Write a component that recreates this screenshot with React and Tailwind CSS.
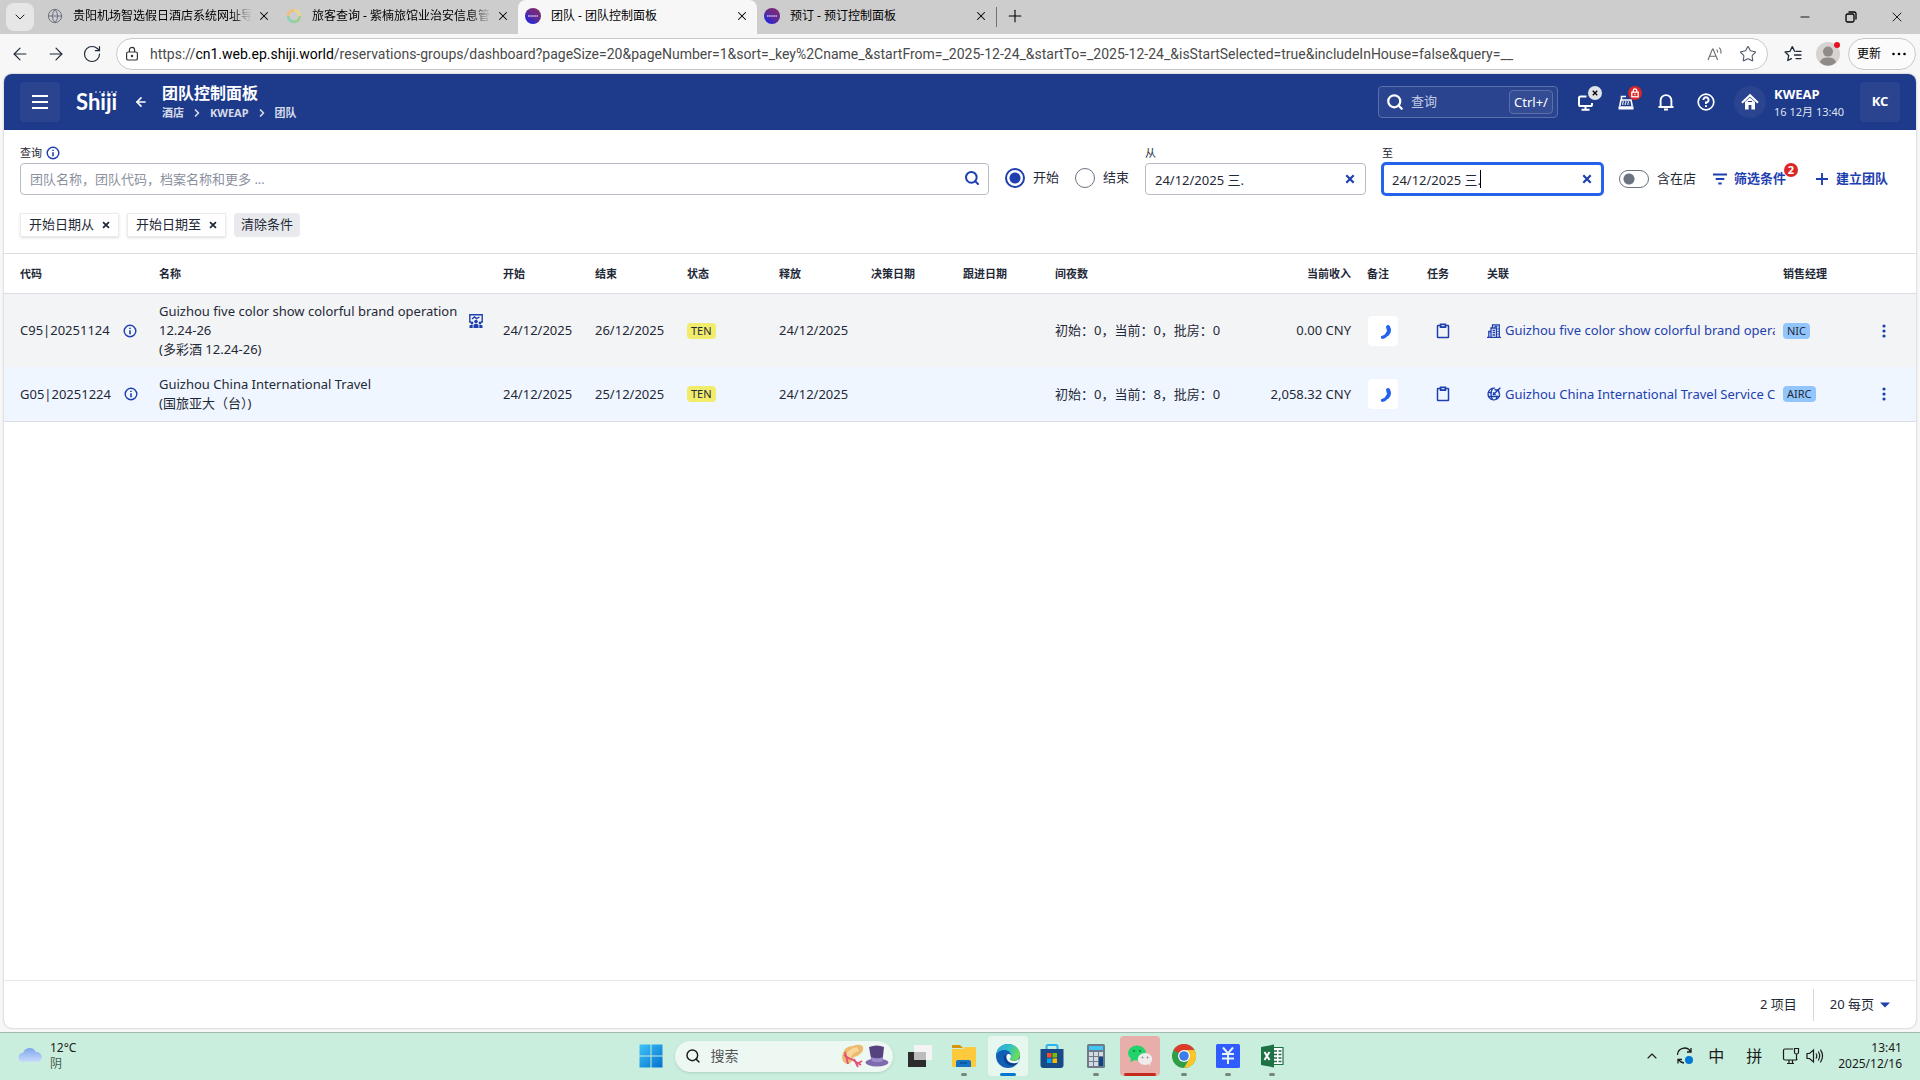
import React, { useState } from 'react';
import { ArrowLeft, ArrowRight, ChevronDown, ChevronRight, ChevronUp, Globe, Minus, Plus, RotateCw, Search, Star, X } from 'lucide-react';

const tabs = [
  { title: '贵阳机场智选假日酒店系统网址导', icon: 'globe' },
  { title: '旅客查询 - 紫楠旅馆业治安信息管', icon: 'ring' },
  { title: '团队 - 团队控制面板', icon: 'shiji', active: true },
  { title: '预订 - 预订控制面板', icon: 'shiji' },
];

const url = {
  scheme: 'https://',
  host: 'cn1.web.ep.shiji.world',
  path: '/reservations-groups/dashboard?pageSize=20&pageNumber=1&sort=_key%2Cname_&startFrom=_2025-12-24_&startTo=_2025-12-24_&isStartSelected=true&includeInHouse=false&query=__',
};

const groups = [
  {
    code: 'C95|20251124',
    name: 'Guizhou five color show colorful brand operation 12.24-26',
    alias: '(多彩酒 12.24-26)',
    event: true,
    start: '24/12/2025',
    end: '26/12/2025',
    status: 'TEN',
    release: '24/12/2025',
    nights: '初始：0，当前：0，批房：0',
    revenue: '0.00 CNY',
    profile: 'Guizhou five color show colorful brand operat',
    profileType: 'company',
    manager: 'NIC',
    rowClass: 'bg-[#f3f4f6]',
  },
  {
    code: 'G05|20251224',
    name: 'Guizhou China International Travel',
    alias: '(国旅亚大（台）)',
    start: '24/12/2025',
    end: '25/12/2025',
    status: 'TEN',
    release: '24/12/2025',
    nights: '初始：0，当前：8，批房：0',
    revenue: '2,058.32 CNY',
    profile: 'Guizhou China International Travel Service Ce',
    profileType: 'agency',
    manager: 'AIRC',
    rowClass: 'bg-[#eff6ff]',
  },
];

const InfoIcon = () => (
  <svg className="w-3.5 h-3.5 shrink-0 text-[#1e40af]" viewBox="0 0 14 14" fill="none" stroke="currentColor" strokeWidth="1.4">
    <circle cx="7" cy="7" r="5.8" />
    <path d="M7 6.2v4M7 3.7v1.4" strokeWidth="1.6" />
  </svg>
);

const CrossIcon = ({ className }) => (
  <svg className={className} viewBox="0 0 10 10" fill="none" stroke="currentColor" strokeWidth="2.2">
    <path d="M1.3 1.3l7.4 7.4M8.7 1.3L1.3 8.7" />
  </svg>
);

const TabIcon = ({ type }) => {
  if (type === 'globe') return <Globe className="w-4 h-4 shrink-0 text-gray-500" strokeWidth={1.5} />;
  if (type === 'ring') {
    return (
      <svg className="w-4 h-4 shrink-0" viewBox="0 0 16 16" fill="none" strokeWidth="2.6" strokeLinecap="round">
        <path d="M2.2 9A6 6 0 0 1 9 2.2" stroke="#f2c078" />
        <path d="M9 2.2A6 6 0 0 1 13.8 9" stroke="#e9d88a" />
        <path d="M13.8 9A6 6 0 0 1 7 13.8" stroke="#9ccf8a" />
        <path d="M7 13.8A6 6 0 0 1 2.2 9" stroke="#8ed0b4" />
      </svg>
    );
  }
  return (
    <svg className="w-4 h-4 shrink-0" viewBox="0 0 16 16">
      <defs>
        <linearGradient id="shijiTab" x1="0" y1="1" x2="0.8" y2="0">
          <stop offset="0" stopColor="#0a22ff" />
          <stop offset="0.5" stopColor="#5a2a9c" />
          <stop offset="1" stopColor="#86286a" />
        </linearGradient>
      </defs>
      <circle cx="8" cy="8" r="8" fill="url(#shijiTab)" />
      <path d="M3 8h10" stroke="#c9b8ea" strokeWidth="1.6" strokeDasharray="1.6 .5" />
    </svg>
  );
};

const TabBar = () => (
  <div className="flex h-[34px] bg-[#cdcdcd] text-black">
    <button aria-label="标签页操作" className="w-7 h-7 mt-[3px] mx-1.5 rounded-lg bg-[#e6e6e6] flex items-center justify-center">
      <ChevronDown className="w-4 h-4" strokeWidth={1.3} />
    </button>
    <div role="tablist" className="flex">
      {tabs.map((tab) => (
        <div
          key={tab.title}
          className={`w-[239px] h-full flex items-center px-[7px] pb-0.5 text-xs ${tab.active ? 'bg-[#f7f7f7] rounded-t-lg' : ''}`}
        >
          <button role="tab" aria-selected={!!tab.active} className="flex-1 min-w-0 flex items-center gap-2.5">
            <TabIcon type={tab.icon} />
            <span
              className={`flex-1 text-left whitespace-nowrap overflow-hidden mr-1 ${tab.icon === 'shiji' ? '' : '[mask-image:linear-gradient(to_right,black_88%,transparent)]'}`}
            >
              {tab.title}
            </span>
          </button>
          <button aria-label="关闭标签页" className="w-4 h-4 flex items-center justify-center">
            <X className="w-3.5 h-3.5" strokeWidth={1.8} />
          </button>
        </div>
      ))}
    </div>
    <div className="w-px h-5 mt-[7px] bg-gray-500" />
    <button aria-label="新建标签页" className="ml-2 mb-0.5">
      <Plus className="w-5 h-5" strokeWidth={1.3} />
    </button>
    <div className="ml-auto flex items-center">
      <button aria-label="最小化" className="w-[46px] flex justify-center">
        <Minus className="w-3.5 h-3.5" strokeWidth={1.5} />
      </button>
      <button aria-label="还原" className="w-[46px] flex justify-center">
        <svg className="w-3 h-3" viewBox="0 0 12 12" fill="none" stroke="currentColor" strokeWidth="1.3">
          <rect x="1" y="3" width="8" height="8" rx="1.5" />
          <path d="M3.5 1H9.2A1.8 1.8 0 0 1 11 2.8V8.5" />
        </svg>
      </button>
      <button aria-label="关闭" className="w-[46px] flex justify-center">
        <X className="w-4 h-4" strokeWidth={1.3} />
      </button>
    </div>
  </div>
);

const AddressBar = () => (
  <div className="flex items-center h-10 bg-[#f7f7f7] text-gray-800 pr-1">
    <button aria-label="后退" className="ml-2.5">
      <ArrowLeft className="w-5 h-5" strokeWidth={1.4} />
    </button>
    <button aria-label="前进" className="ml-4">
      <ArrowRight className="w-5 h-5" strokeWidth={1.4} />
    </button>
    <button aria-label="刷新" className="ml-4">
      <RotateCw className="w-5 h-5" strokeWidth={1.4} />
    </button>
    <div className="flex-1 min-w-0 ml-3.5 h-8 flex items-center rounded-full border border-[#c8c8c8] bg-white pl-[7px] pr-1.5 text-sm">
      <svg className="w-4 h-4 shrink-0" viewBox="0 0 16 16" fill="none" stroke="#333" strokeWidth="1.2">
        <rect x="2.6" y="6" width="10.8" height="8" rx="1.6" />
        <path d="M5.4 6V4a2.6 2.6 0 0 1 5.2 0v2" />
        <circle cx="8" cy="10" r=".6" fill="#333" />
      </svg>
      <span className="flex-1 min-w-0 ml-2.5 whitespace-nowrap overflow-hidden text-[#4a4a4a] font-[Roboto,'Noto_Sans_CJK_SC',sans-serif]">
        {url.scheme}
        <span className="text-black">{url.host}</span>
        {url.path}
      </span>
      <button aria-label="大声朗读" className="mr-4">
        <svg className="w-4 h-4" viewBox="0 0 16 16" fill="none" stroke="#6b6b6b" strokeWidth="1.1">
          <path d="M1 14L5.5 3h.6L10.6 14M2.6 10.2h6.4" />
          <path d="M9.6 3.6q1.3 1.2 1 3M12 1.6q2.6 2.2 1.8 6" />
        </svg>
      </button>
      <button aria-label="收藏" className="mr-1">
        <Star className="w-[18px] h-[18px] text-gray-600" strokeWidth={1.4} />
      </button>
    </div>
    <button aria-label="收藏夹" className="ml-4">
      <svg className="w-[18px] h-[18px]" viewBox="0 0 18 18" fill="none" stroke="currentColor" strokeWidth="1.3" strokeLinejoin="round" strokeLinecap="round">
        <path d="M10.6 6.2L8.3 1.6 6 6.3l-4.900.700 3.600 3.500-.900 5 3.600-1.900M12 6.400h5M10.500 10h6.500M12 13.600h5" />
      </svg>
    </button>
    <button aria-label="个人资料" className="ml-3.5 relative">
      <svg className="w-6 h-6" viewBox="0 0 24 24">
        <circle cx="12" cy="12" r="12" fill="#d6d3d0" />
        <circle cx="12" cy="9.6" r="5" fill="#8f8b88" />
        <path d="M4 20.6c1-4 4-5 8-5s7 1 8 5a12 12 0 0 1-16 0z" fill="#8f8b88" />
      </svg>
      <span className="absolute top-0 right-0 w-1.5 h-1.5 rounded-full bg-[#e81123]" />
    </button>
    <button className="ml-2 h-8 flex items-center gap-2.5 rounded-full border border-[#c8c8c8] bg-[#fbfbfb] px-2 text-xs text-black">
      更新
      <svg className="w-4 h-4" viewBox="0 0 16 16" fill="currentColor">
        <circle cx="2.5" cy="8" r="1.3" />
        <circle cx="8" cy="8" r="1.3" />
        <circle cx="13.5" cy="8" r="1.3" />
      </svg>
    </button>
  </div>
);

const AppHeader = () => (
  <header className="flex items-center h-14 bg-[#1e3a8a] text-white px-4">
    <button aria-label="菜单" className="w-10 h-10 rounded bg-[#2a448f] flex items-center justify-center">
      <svg className="w-4 h-4" viewBox="0 0 16 16" stroke="currentColor" strokeWidth="2">
        <path d="M0 2h16M0 8h16M0 14h16" />
      </svg>
    </button>
    <div className="relative ml-4 w-[43px] leading-6 text-[22px] font-bold font-[Lato,sans-serif]">
      Shiji
      <svg className="absolute right-0 top-0 w-6 h-1" viewBox="0 0 24 4" fill="currentColor">
        {[1, 5, 9, 13, 17, 21].map((x) => (
          <circle key={x} cx={x} cy="2" r=".8" />
        ))}
      </svg>
    </div>
    <button aria-label="返回" className="ml-[15px] w-3">
      <ArrowLeft className="w-3.5 h-3.5" strokeWidth={2.8} />
    </button>
    <div className="ml-4 pt-0.5">
      <h1 className="text-base leading-5 font-bold">团队控制面板</h1>
      <nav aria-label="导航路径" className="flex items-center gap-[7px] text-[11px] leading-5 font-bold text-[#d5daea]">
        <a href="#hotel">酒店</a>
        <ChevronRight className="w-3 h-3" strokeWidth={3.4} />
        <a href="#kweap">KWEAP</a>
        <ChevronRight className="w-3 h-3" strokeWidth={3.4} />
        <a href="#groups">团队</a>
      </nav>
    </div>
    <div className="ml-auto w-[180px] h-8 flex items-center rounded border border-[#5a6faa] bg-[#2a448f] pl-[7px] pr-1">
      <Search className="w-[18px] h-[18px] shrink-0" strokeWidth={3} />
      <input
        aria-label="全局查询"
        placeholder="查询"
        className="flex-1 min-w-0 ml-[7px] bg-transparent text-[13px] placeholder:text-[#c3cbe2] outline-none"
      />
      <kbd className="w-11 h-6 rounded border border-[#5a6faa] bg-[#334c94] text-[13px] leading-[22px] text-center font-[inherit]">Ctrl+/</kbd>
    </div>
    <button aria-label="工作站" className="relative ml-[18px] w-5 h-6">
      <svg className="w-5 h-5 mt-0.5" viewBox="0 0 20 20" fill="none" stroke="currentColor" strokeWidth="2">
        <path d="M10.5 3.5H4.6A1.6 1.6 0 0 0 3 5.100v6.300A1.600 1.600 0 0 0 4.600 13h9.800a1.600 1.600 0 0 0 1.600-1.600V10M5.500 16.800h8M9.500 13v3.500" />
      </svg>
      <span className="absolute -top-1 left-3 w-3.5 h-3.5 rounded-full bg-[#e0e3ea] text-black flex items-center justify-center">
        <CrossIcon className="w-1.5 h-1.5" />
      </span>
    </button>
    <button aria-label="收银" className="relative ml-5 w-5 h-6">
      <svg className="w-5 h-5 mt-0.5" viewBox="0 0 20 20" fill="none" stroke="currentColor" strokeWidth="1.600">
        <path d="M10 3.500H5.500v3M3.800 13L5 7h10l1.200 6" />
        <path d="M6.500 9h7M6 11h8" strokeDasharray="1.400 1.200" strokeWidth="1.300" />
        <path d="M2.500 13.200h15v3.300h-15z" fill="currentColor" stroke="none" />
      </svg>
      <span className="absolute -top-1 left-3 w-3.5 h-3.5 rounded-full bg-[#dc2626] flex items-center justify-center">
        <svg className="w-2.5 h-2.5" viewBox="0 0 10 10" fill="none" stroke="currentColor" strokeWidth="1.300">
          <rect x="1.800" y="4.200" width="6.400" height="4.600" />
          <path d="M3.200 4V2.700a1.800 1.800 0 0 1 3.600 0V4M5 5.800v1.400" />
        </svg>
      </span>
    </button>
    <button aria-label="通知" className="ml-5">
      <svg className="w-5 h-5" viewBox="0 0 20 20" fill="none" stroke="currentColor" strokeWidth="1.900">
        <path d="M2.500 15h15M4.600 15V8.500a5.400 5.400 0 0 1 10.800 0V15" />
        <path d="M8 17.600h4" strokeWidth="2" />
      </svg>
    </button>
    <button aria-label="帮助" className="ml-5">
      <svg className="w-5 h-5" viewBox="0 0 20 20" fill="none" stroke="currentColor" strokeWidth="1.700">
        <circle cx="10" cy="10" r="7.800" />
        <path d="M7.400 8A2.600 2.600 0 1 1 10 10.500v1.600M10 13.200v1.900" strokeWidth="2" />
      </svg>
    </button>
    <button aria-label="酒店首页" className="ml-[18px] w-8 h-8 rounded-full bg-[#2a448f] flex items-center justify-center">
      <svg className="w-[18px] h-[18px]" viewBox="0 0 18 18" fill="none" stroke="currentColor" strokeWidth="2">
        <path d="M1 9.800L9 2.200l8 7.600" />
        <path d="M4 9v7.500h3.600V12h2.800v4.500H14V9L9 4.500z" fill="currentColor" stroke="none" />
        <path d="M6.800 8.500h4.400" stroke="#1e3a8a" strokeWidth="1.200" />
      </svg>
    </button>
    <div className="ml-2 w-[86px] pt-0.5">
      <div className="text-[13px] leading-[18px] font-bold">KWEAP</div>
      <div className="text-[11px] leading-[18px] text-[#dfe3ef] whitespace-nowrap">16 12月 13:40</div>
    </div>
    <button className="w-10 h-10 rounded bg-[#2a448f] text-[13px] font-bold">KC</button>
  </header>
);

const DateField = ({ id, label, focused }) => {
  const [value, setValue] = useState('24/12/2025 三.');
  return (
    <div className="w-[221px] shrink-0">
      <label htmlFor={id} className="block h-5 text-[11px] leading-5">{label}</label>
      <div className={`relative h-8 rounded ${focused ? 'bg-white outline-3 -outline-offset-2 outline-[#2563eb] border border-[#2563eb]' : 'border border-[#b6bbc6]'}`}>
        <input
          id={id}
          value={value}
          onChange={(e) => setValue(e.target.value)}
          className="w-full h-full px-[9px] bg-transparent text-[13px] outline-none"
        />
        {focused && <span className="absolute left-[97px] top-1.5 w-px h-[18px] bg-black" />}
        <button aria-label="清除日期" onClick={() => setValue('')} className="absolute right-2.5 top-2.5 text-[#1e40af]">
          <CrossIcon className="w-2.5 h-2.5" />
        </button>
      </div>
    </div>
  );
};

const Filters = () => {
  const [dateType, setDateType] = useState('start');
  const [inHouse, setInHouse] = useState(false);

  return (
    <section className="px-4 pt-[13px] pb-4">
      <div className="flex items-start">
        <div className="flex-1 min-w-0">
          <div className="flex items-center gap-1 h-5">
            <label htmlFor="group-query" className="text-[11px] leading-5">查询</label>
            <InfoIcon />
          </div>
          <div className="relative h-8 rounded border border-[#b6bbc6]">
            <input
              id="group-query"
              placeholder="团队名称，团队代码，档案名称和更多 ..."
              className="w-full h-full px-[9px] text-[13px] placeholder:text-[#8b919e] outline-none"
            />
            <button aria-label="搜索" className="absolute right-2 top-1.5 text-[#1e40af]">
              <Search className="w-4 h-4" strokeWidth={3} />
            </button>
          </div>
        </div>
        <div role="radiogroup" aria-label="日期类型" className="flex gap-4 mx-4 mt-[25px] text-[13px]">
          {[['start', '开始'], ['end', '结束']].map(([key, label]) => (
            <label key={key} className="flex items-center gap-2">
              <input
                type="radio"
                name="date-type"
                checked={dateType === key}
                onChange={() => setDateType(key)}
                className="appearance-none w-5 h-5 rounded-full border border-[#6b7280] bg-white checked:border-2 checked:border-[#1e40af] checked:bg-[radial-gradient(circle,#1e40af_5px,white_6px)]"
              />
              <span>{label}</span>
            </label>
          ))}
        </div>
        <DateField id="date-from" label="从" />
        <div className="w-4 shrink-0" />
        <DateField id="date-to" label="至" focused />
        <div className="flex items-center h-8 mt-5 ml-4 text-[13px]">
          <label className="flex items-center gap-2">
            <input
              type="checkbox"
              role="switch"
              checked={inHouse}
              onChange={(e) => setInHouse(e.target.checked)}
              className="appearance-none w-[30px] h-[18px] rounded-full border border-[#6b7280] bg-[radial-gradient(circle_at_9px_8px,#6b7280_5px,white_6px)] checked:bg-[radial-gradient(circle_at_19px_8px,#1e40af_5px,white_6px)]"
            />
            含在店
          </label>
          <button className="relative flex items-center gap-1.5 ml-4 text-[#1e40af] font-bold">
            <svg className="w-4 h-4" viewBox="0 0 16 16" stroke="currentColor" strokeWidth="1.800">
              <path d="M1 3.500h14M3.700 8h8.600M6.300 12.500h3.400" />
            </svg>
            筛选条件
            <span className="absolute -right-3 -top-1.5 w-3.5 h-3.5 rounded-full bg-[#dc2626] text-white text-[11px] leading-[14px] text-center">2</span>
          </button>
          <button className="flex items-center gap-1.5 ml-7 mr-3 text-[#1e40af] font-bold">
            <svg className="w-4 h-4" viewBox="0 0 16 16" stroke="currentColor" strokeWidth="1.900">
              <path d="M8 2v12M2 8h12" />
            </svg>
            建立团队
          </button>
        </div>
      </div>
      <div className="flex items-center gap-2 mt-[18px] text-[13px]">
        {['开始日期从', '开始日期至'].map((text) => (
          <span key={text} className="flex items-center gap-2 h-6 px-2 border border-[#ececef] bg-white shadow-sm">
            {text}
            <button aria-label={`移除${text}`}>
              <CrossIcon className="w-2 h-2" />
            </button>
          </span>
        ))}
        <button className="h-6 px-[7px] rounded-sm bg-[#e9eaee]">清除条件</button>
      </div>
    </section>
  );
};

const EventIcon = () => (
  <svg className="w-3.5 h-3.5 shrink-0" viewBox="0 0 14 14" fill="none" stroke="#1e40af" strokeWidth="1.400">
    <path d="M2 8H.8V.8h12.400V8H12M3 5l2.500-2 2 1.600L10.500 3" />
    <circle cx="7" cy="7.500" r="1.800" fill="#1e40af" stroke="none" />
    <circle cx="3" cy="9" r="1.400" fill="#1e40af" stroke="none" />
    <circle cx="11" cy="9" r="1.400" fill="#1e40af" stroke="none" />
    <path d="M4.500 14v-3q2.500-2.400 5 0v3zM.5 14v-2.400q1.500-1.400 3.200-.6V14zM13.500 14v-2.400q-1.500-1.400-3.200-.6V14z" fill="#1e40af" stroke="none" />
  </svg>
);

const ProfileIcon = ({ type }) =>
  type === 'company' ? (
    <svg className="w-3.5 h-3.5 shrink-0" viewBox="0 0 14 14" fill="none" stroke="currentColor" strokeWidth="1.300">
      <path d="M0 13.300h14M1.800 13V7.500H4M4 13V4h5.500v9M5.500 4V.8h6.800V13" />
      <path d="M5.500 6.500h2.700M5.500 8.700h2.700M5.500 11h2.700M7.500 2.500h3M11 4.500v1M11 7v1M11 9.500v1" />
    </svg>
  ) : (
    <svg className="w-3.5 h-3.5 shrink-0" viewBox="0 0 14 14" fill="none" stroke="currentColor" strokeWidth="1.300">
      <path d="M8 1.200A5.900 5.900 0 1 0 12.800 7.500M1 5.500h4M1 9.500h11M5.500 1.700Q2.500 7 5.500 12.800M8.500 12.800Q10 11 10 8.500" />
      <path d="M6 8L13.300.7M7.500 2.500l4 1 1 4M6 5.500L8.500 8" strokeWidth="1.500" />
    </svg>
  );

const GroupRow = ({ group }) => (
  <tr className={group.rowClass}>
    <td className="pl-4 pr-2">
      <span className="flex items-center gap-[13px]">
        {group.code}
        <InfoIcon />
      </span>
    </td>
    <td className="p-2">
      <div className="flex items-start justify-between gap-2 pr-1">
        <div>
          {group.name}
          <div>{group.alias}</div>
        </div>
        {group.event && (
          <span className="mt-3">
            <EventIcon />
          </span>
        )}
      </div>
    </td>
    <td className="px-2">{group.start}</td>
    <td className="px-2">{group.end}</td>
    <td className="px-2">
      <span className="block w-fit h-4 px-1 rounded-sm bg-[#f1ec6c] text-[11px] leading-4">{group.status}</span>
    </td>
    <td className="px-2">{group.release}</td>
    <td />
    <td />
    <td className="px-2">{group.nights}</td>
    <td className="px-2 text-right">{group.revenue}</td>
    <td className="px-2">
      <button aria-label="备注" className="block w-[30px] h-[30px] ml-px rounded bg-white">
        <svg className="w-[30px] h-[30px]" viewBox="0 0 30 30" fill="none" stroke="#2563eb" strokeLinecap="round">
          <path d="M20 11q2.200 4-.6 7" strokeWidth="4" />
          <path d="M19.400 18q-2.400 3-5 3.300" strokeWidth="3.200" />
        </svg>
      </button>
    </td>
    <td className="px-2">
      <button aria-label="任务" className="block ml-2 text-[#1e40af]">
        <svg className="w-4 h-4" viewBox="0 0 16 16" fill="none" stroke="currentColor" strokeWidth="1.500">
          <rect x="2.500" y="2.500" width="11" height="12" rx=".5" />
          <path d="M5.500 1.200h5v3h-5z" fill="currentColor" />
          <path d="M6.500 2.700h3" stroke="white" strokeWidth="1" />
        </svg>
      </button>
    </td>
    <td className="pl-2">
      <a href="#profile" className="flex items-center gap-1 text-[#1e40af]">
        <ProfileIcon type={group.profileType} />
        <span className="flex-1 min-w-0 overflow-hidden whitespace-nowrap">{group.profile}</span>
      </a>
    </td>
    <td className="px-2">
      <span className="block w-fit h-4 px-1 rounded-sm bg-[#93c5fd] text-[11px] leading-4">{group.manager}</span>
    </td>
    <td className="px-2">
      <button aria-label="更多操作" className="block mx-auto text-[#1e40af]">
        <svg className="w-4 h-4" viewBox="0 0 16 16" fill="currentColor">
          <circle cx="8" cy="3" r="1.600" />
          <circle cx="8" cy="8" r="1.600" />
          <circle cx="8" cy="13" r="1.600" />
        </svg>
      </button>
    </td>
  </tr>
);

const GroupTable = () => (
  <table className="w-full table-fixed text-[13px] leading-[19px] border-y border-[#dcdee3]">
    <colgroup>
      <col className="w-[147px]" />
      <col />
      <col className="w-[92px]" />
      <col className="w-[92px]" />
      <col className="w-[92px]" />
      <col className="w-[92px]" />
      <col className="w-[92px]" />
      <col className="w-[92px]" />
      <col className="w-[192px]" />
      <col className="w-[120px]" />
      <col className="w-[60px]" />
      <col className="w-[60px]" />
      <col className="w-[296px]" />
      <col className="w-[77px]" />
      <col className="w-16" />
    </colgroup>
    <thead>
      <tr className="h-10 border-b border-[#dcdee3] text-left text-[11px]">
        <th className="pl-4">代码</th>
        <th className="px-2">名称</th>
        <th className="px-2">开始</th>
        <th className="px-2">结束</th>
        <th className="px-2">状态</th>
        <th className="px-2">释放</th>
        <th className="px-2">决策日期</th>
        <th className="px-2">跟进日期</th>
        <th className="px-2">间夜数</th>
        <th className="px-2 text-right">当前收入</th>
        <th className="px-2">备注</th>
        <th className="px-2">任务</th>
        <th className="px-2">关联</th>
        <th className="px-2">销售经理</th>
        <th aria-label="操作" />
      </tr>
    </thead>
    <tbody>
      {groups.map((group) => (
        <GroupRow key={group.code} group={group} />
      ))}
    </tbody>
  </table>
);

const ListFooter = () => (
  <footer className="mt-auto h-12 flex items-center justify-end border-t border-[#e5e7eb] text-[13px]">
    <span>2 项目</span>
    <div className="w-px h-8 mx-4 bg-[#d5d7dc]" />
    <button className="flex items-center gap-1.5 mr-[26px]">
      20 每页
      <svg className="w-2.5 h-1.5" viewBox="0 0 10 6" fill="#1e40af">
        <path d="M0 0.500h10L5 5.500z" />
      </svg>
    </button>
  </footer>
);

const apps = [
  {
    name: '任务视图',
    art: (
      <>
        <path d="M0 8h18v15H0z" fill="#2c2c2c" />
        <path d="M6 1h18v15H6z" fill="#f4f4f4" />
        <path d="M6 8h12v8H6z" fill="#bdbdbd" />
      </>
    ),
  },
  {
    name: '文件资源管理器',
    running: true,
    art: (
      <>
        <path d="M0 2q0-1 1-1h7l3 3H0z" fill="#d9950a" />
        <path d="M0 5h11l1.500-2H23q1 0 1 1v18q0 1-1 1H1q-1 0-1-1z" fill="#fcca3c" />
        <path d="M4 23v-5q0-2 2-2h11q2 0 2 2v5z" fill="#1573c4" />
        <path d="M8 19h7" stroke="#0b4f93" strokeWidth="1.500" />
      </>
    ),
  },
  {
    name: 'Edge',
    active: true,
    art: (
      <>
        <defs>
          <linearGradient id="edgeWave" x1="0" y1="0" x2="1" y2=".3">
            <stop offset="0" stopColor="#2aa7e0" />
            <stop offset=".6" stopColor="#33c3c0" />
            <stop offset="1" stopColor="#6bdc57" />
          </linearGradient>
        </defs>
        <circle cx="12" cy="12" r="12" fill="#0f5fb4" />
        <path d="M0 11C1 4 6 0 12 0c7 0 12 5 12 10.500 0 4-3 6.500-6.500 6.500-3 0-4-1.200-4-2 0-1 1.500-1.500 1.500-4C15 8.500 12 6 8.500 6 4 6 1 8.500 0 11z" fill="url(#edgeWave)" />
        <path d="M8 12c-1 5 3 9.500 8 9.500 3 0 5-1.500 6-3-2 1-3.500 1.200-5.500.8C12 18.300 9.500 15.500 10.500 11.500 9 11 8.200 11.500 8 12z" fill="#0b3f8c" />
        <path d="M10.500 12c.4-1.800 2.200-2.300 3.600-1.600 1.500 1.200.9 3-.2 4.200-.5 1 .5 2.200 3.600 2.400 2.500 0 4.600-.8 6.200-2.800-.3 1.800-.9 3.100-1.800 4.300-6.400 2.500-12.400-1.500-11.400-6.500z" fill="#f2fbf6" />
      </>
    ),
  },
  {
    name: 'Microsoft Store',
    art: (
      <>
        <path d="M6.500 7V2.500Q6.500 1 8 1h8q1.500 0 1.500 1.500V7" fill="none" stroke="#28b5ef" strokeWidth="2" />
        <path d="M.5 5h23v16q0 3-3 3h-17q-3 0-3-3z" fill="#174a86" />
        <path d="M7 9h4.500v4.500H7z" fill="#f25022" />
        <path d="M12.500 9H17v4.500h-4.500z" fill="#7fba00" />
        <path d="M7 14.500h4.500V19H7z" fill="#00a4ef" />
        <path d="M12.500 14.500H17V19h-4.500z" fill="#ffb900" />
      </>
    ),
  },
  {
    name: '计算器',
    running: true,
    art: (
      <>
        <rect x="3" width="18" height="24" rx="1.500" fill="#6d7b8a" />
        <path d="M5 2h14v4H5z" fill="#3fc6f3" />
        <path d="M5 8h4v4H5zM10 8h4v4h-4zM15 8h4v4h-4zM5 13h4v4H5zM10 13h4v4h-4zM5 18h4v4H5zM10 18h4v4h-4z" fill="#d5dae1" />
        <path d="M15 13h4v9h-4z" fill="#0d4582" />
      </>
    ),
  },
  {
    name: '微信',
    alert: true,
    art: (
      <>
        <ellipse cx="9" cy="9" rx="9" ry="7.500" fill="#22d36b" />
        <path d="M3 13l-.5 5 5-2.500z" fill="#22d36b" />
        <circle cx="6" cy="7" r="1" fill="#0d7a3a" />
        <circle cx="12" cy="7" r="1" fill="#0d7a3a" />
        <ellipse cx="17" cy="15" rx="7.200" ry="6" fill="#f0ecec" />
        <path d="M20 19l2.500 3-.5-5z" fill="#f0ecec" />
        <circle cx="14.500" cy="13.500" r=".9" fill="#8b8b8b" />
        <circle cx="19.500" cy="13.500" r=".9" fill="#8b8b8b" />
      </>
    ),
  },
  {
    name: 'Chrome',
    running: true,
    art: (
      <>
        <circle cx="12" cy="12" r="12" fill="#2f9e47" />
        <path d="M12 12L1.600 6A12 12 0 0 1 22.400 6z" fill="#dd3a2b" />
        <path d="M12 6h10.400A12 12 0 0 1 12 24l5.200-9z" fill="#fcc629" />
        <circle cx="12" cy="12" r="6" fill="#fff" />
        <circle cx="12" cy="12" r="4.800" fill="#3b7ded" />
      </>
    ),
  },
  {
    name: '收款',
    running: true,
    art: (
      <>
        <rect width="24" height="24" rx="1.500" fill="#2f5bff" />
        <path d="M7 3.500l5 6 5-6M6 10h12M6 14.500h12M12 9.500v10.500" fill="none" stroke="#e8f3f5" strokeWidth="2" />
      </>
    ),
  },
  {
    name: 'Excel',
    running: true,
    art: (
      <>
        <path d="M12 3.500h11v17H12z" fill="#fff" stroke="#1e7145" strokeWidth="1.200" />
        <path d="M14 7h3M18.500 7h3M14 10.500h3M18.500 10.500h3M14 14h3M18.500 14h3M14 17.500h3M18.500 17.500h3" stroke="#1e7145" strokeWidth="1.500" />
        <path d="M1 3l13-2.500v23L1 21z" fill="#1e7145" />
        <path d="M4.500 8l5 8M9.500 8l-5 8" stroke="#fff" strokeWidth="2" />
      </>
    ),
  },
];

const Taskbar = () => (
  <div className="h-12 shrink-0 grid grid-cols-[1fr_auto_1fr] items-center border-t border-[#a3bbae] bg-[#c9eedd] text-[#1b1b1b] text-xs pb-px">
    <div className="flex items-center gap-2 pl-[18px]">
      <svg className="w-6 h-5" viewBox="0 0 24 20">
        <defs>
          <linearGradient id="cloud" x1="0" y1="0" x2="0" y2="1">
            <stop offset="0" stopColor="#7ea6ec" />
            <stop offset="1" stopColor="#c9dcfb" />
          </linearGradient>
        </defs>
        <path d="M5 16a4.500 4.500 0 0 1 0-9A7 7 0 0 1 18 6a5 5 0 0 1 1.500 10z" fill="url(#cloud)" />
      </svg>
      <div className="leading-4">
        <div>12°C</div>
        <div className="text-[#4b5a53]">阴</div>
      </div>
    </div>
    <div className="flex items-center pl-3">
      <button aria-label="开始" className="mr-3">
        <svg className="w-6 h-6" viewBox="0 0 24 24">
          <defs>
            <linearGradient id="win" x1="0" y1="0" x2="1" y2="1">
              <stop offset="0" stopColor="#41c4f8" />
              <stop offset="1" stopColor="#0270cd" />
            </linearGradient>
          </defs>
          <path d="M.5.500h11v11H.5zM12.500.500h11v11h-11zM.5 12.500h11v11H.5zM12.500 12.500h11v11h-11z" fill="url(#win)" />
        </svg>
      </button>
      <div className="w-[218px] h-[31px] flex items-center rounded-full bg-[#eef8f3] shadow-sm pl-2.5 pr-1">
        <Search className="w-4 h-4 shrink-0" strokeWidth={2.2} />
        <input aria-label="搜索" placeholder="搜索" className="flex-1 min-w-0 ml-2.5 bg-transparent text-sm placeholder:text-[#555] outline-none" />
        <svg className="w-6 h-6" viewBox="0 0 24 24">
          <path d="M1 14Q2 2 12 2q3-2 8-1 4 2 1 7-3 4-8 5-2 5-5 7-6 0-7-6z" fill="#eebb6e" />
          <path d="M4 12Q8 4 16 3l2 4q-7 1-9 9z" fill="#f6d69b" />
          <path d="M3 11q5 4 9 5l8 5M13 15l4 8M4 8l3 12M16 20l5-3" stroke="#e0527a" strokeWidth="1.800" fill="none" />
        </svg>
        <svg className="w-6 h-6" viewBox="0 0 24 24">
          <ellipse cx="12" cy="18.500" rx="11.500" ry="4" fill="#7d6bad" />
          <path d="M4 3q8-3 15 0l-1.500 14q-5.500 3-11 0z" fill="#54437f" />
          <path d="M6 13q6 2.500 12 0v4q-6 3-11.500 0z" fill="#9c8bcd" />
        </svg>
      </div>
      <div className="flex ml-[5px]">
        {apps.map((app) => (
          <button
            key={app.name}
            aria-label={app.name}
            className={`relative w-10 h-10 mx-0.5 rounded flex items-center justify-center ${app.active ? 'bg-[#e6f7ef]' : ''} ${app.alert ? 'bg-[#e8aeaa]' : ''}`}
          >
            <svg className="w-6 h-6" viewBox="0 0 24 24">{app.art}</svg>
            {app.running && <span className="absolute bottom-0 w-1.5 h-[3px] rounded-full bg-[#75887e]" />}
            {app.active && <span className="absolute bottom-0 w-4 h-[3px] rounded-full bg-[#0078d4]" />}
            {app.alert && <span className="absolute bottom-0 w-8 h-[3px] rounded-full bg-[#c42b1c]" />}
          </button>
        ))}
      </div>
    </div>
    <div className="flex items-center justify-end pr-[18px]">
      <ChevronUp className="w-4 h-4" strokeWidth={1.6} />
      <svg className="w-[18px] h-[18px] ml-4" viewBox="0 0 18 18" fill="none" stroke="currentColor" strokeWidth="1.300">
        <path d="M1.500 8a7 7 0 0 1 13-3.500M15 1v4h-4M8 16a7 7 0 0 1-5.500-3.500M2 16.500v-4h4" />
        <circle cx="13" cy="13" r="4" fill="#0078d4" stroke="none" />
      </svg>
      <span className="ml-3.5 text-base leading-5">中</span>
      <span className="ml-[22px] text-base leading-5">拼</span>
      <svg className="w-[18px] h-[18px] ml-5" viewBox="0 0 18 18" fill="none" stroke="currentColor" strokeWidth="1.200">
        <path d="M11 2H3Q1.500 2 1.500 3.500v8Q1.500 13 3 13h11q1 0 1-1M5 16.500h7M7 13v3.500M10.500 13v3.500" />
        <path d="M12.500 1.500h4v4q0 1.500-2 1.500t-2-1.500zM14.500 7v6" />
      </svg>
      <svg className="w-[18px] h-[18px] ml-1.5" viewBox="0 0 18 18" fill="none" stroke="currentColor" strokeWidth="1.200">
        <path d="M1 6.500h2.500L7.500 3v12l-4-3.500H1zM10 6.500q1.600 2.500 0 5M12.200 4.500q3 4.500 0 9M14.400 2.700q4.300 6.300 0 12.600" />
      </svg>
      <div className="ml-3.5 text-right leading-4">
        <div>13:41</div>
        <div>2025/12/16</div>
      </div>
    </div>
  </div>
);

export default function App() {
  return (
    <div className="min-h-screen flex flex-col bg-[#f7f7f7] text-[#1f2937] font-['Noto_Sans','Noto_Sans_CJK_SC',sans-serif]">
      <TabBar />
      <AddressBar />
      <main className="flex-1 flex flex-col mx-1 mb-1 rounded-lg overflow-hidden bg-white shadow-[0_0_2px_#9ca3af]">
        <AppHeader />
        <Filters />
        <GroupTable />
        <ListFooter />
      </main>
      <Taskbar />
    </div>
  );
}
